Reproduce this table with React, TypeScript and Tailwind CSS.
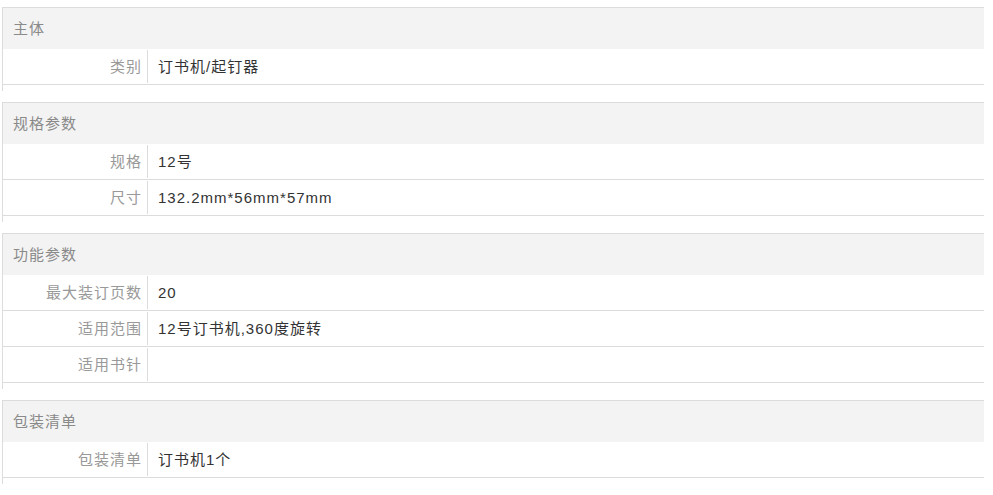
import React from 'react';

interface SpecRow {
  label: string;
  value: string;
}

interface SpecGroup {
  title: string;
  rows: SpecRow[];
}

const groups: SpecGroup[] = [
  { title: '主体', rows: [{ label: '类别', value: '订书机/起钉器' }] },
  {
    title: '规格参数',
    rows: [
      { label: '规格', value: '12号' },
      { label: '尺寸', value: '132.2mm*56mm*57mm' },
    ],
  },
  {
    title: '功能参数',
    rows: [
      { label: '最大装订页数', value: '20' },
      { label: '适用范围', value: '12号订书机,360度旋转' },
      { label: '适用书针', value: '' },
    ],
  },
  { title: '包装清单', rows: [{ label: '包装清单', value: '订书机1个' }] },
];

function Group({ group }: { group: SpecGroup }) {
  return (
    <div className="ml-[2px] mb-[11px] w-[982px] border-l border-t border-[#dcdcdc] pb-[6px]">
      <div className="flex h-[41px] items-center bg-[#f3f3f3] pl-[10px] pt-[1px] text-[#8a8a8a]">{group.title}</div>
      {group.rows.map((row) => (
        <div key={row.label} className="flex h-[36px] items-start border-b border-[#dcdcdc] pt-[1px]">
          <div className="flex h-[33px] w-[145px] shrink-0 items-center justify-end border-r border-[#dcdcdc] pr-[5px] pt-[1px] text-[#999999]">
            {row.label}
          </div>
          <div className="flex h-[33px] items-center pl-[10px] pt-[1px] text-[#333333]">{row.value}</div>
        </div>
      ))}
    </div>
  );
}

export default function App() {
  return (
    <div
      className="min-h-[495px] bg-white pt-[7px] text-[15px] tracking-[1px]"
      style={{ fontFamily: '"Liberation Sans", "Noto Sans CJK SC", sans-serif' }}
    >
      {groups.map((g) => (
        <Group key={g.title} group={g} />
      ))}
    </div>
  );
}
